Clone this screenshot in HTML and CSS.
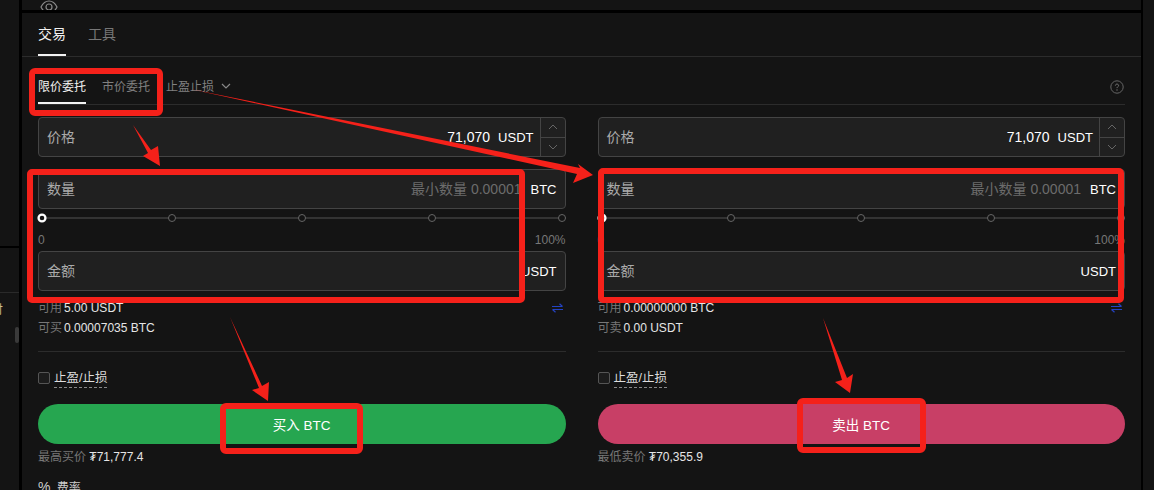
FILE: index.html
```html
<!DOCTYPE html>
<html lang="zh-CN">
<head>
    <meta charset="UTF-8">
    <meta name="viewport" content="width=device-width, initial-scale=1.0">
    <title>交易</title>
    <link rel="stylesheet" href="styles.css">
</head>
<body>
    <div class="page">
        <aside class="rail">
            <div class="rail-top"></div>
            <div class="rail-bottom">
                <span class="rail-line"></span>
                <span class="rail-glyph">付</span>
                <span class="rail-scroll"></span>
            </div>
        </aside>

        <main class="main">
            <div class="top-strip">
                <svg class="eye" width="18" height="18" viewBox="0 0 18 18" fill="none" stroke="#8a8a8a" stroke-width="1.2">
                    <path d="M1 9c2-4 5-6 8-6s6 2 8 6c-2 4-5 6-8 6s-6-2-8-6z"/>
                    <circle cx="9" cy="9" r="3"/>
                </svg>
            </div>

            <section class="panel">
                <nav class="tabs">
                    <a class="tab active">交易</a>
                    <a class="tab">工具</a>
                </nav>

                <div class="order-row">
                    <a class="order-tab active">限价委托</a>
                    <a class="order-tab">市价委托</a>
                    <a class="order-tab">止盈止损
                        <svg class="caret" width="10" height="6" viewBox="0 0 10 6" fill="none" stroke="#888" stroke-width="1.2"><path d="M1 1l4 4 4-4"/></svg>
                    </a>
                    <svg class="help" width="14" height="14" viewBox="0 0 14 14" fill="none">
                        <circle cx="7" cy="7" r="6.2" stroke="#666"/>
                        <path d="M5.4 5.6c0-.9.7-1.5 1.6-1.5s1.6.6 1.6 1.4c0 1.2-1.6 1.3-1.6 2.6" stroke="#777"/>
                        <circle cx="7" cy="10" r=".7" fill="#777"/>
                    </svg>
                </div>

                <div class="columns">
                    <div class="col">
                        <div class="field">
                            <span class="field-label">价格</span>
                            <span class="field-value">71,070</span>
                            <span class="field-unit unit-spin">USDT</span>
                            <div class="spin">
                                <span><svg width="10" height="6" viewBox="0 0 10 6" fill="none" stroke="#666"><path d="M1 5l4-4 4 4"/></svg></span>
                                <span><svg width="10" height="6" viewBox="0 0 10 6" fill="none" stroke="#666"><path d="M1 1l4 4 4-4"/></svg></span>
                            </div>
                        </div>
                        <div class="field field-gap">
                            <span class="field-label">数量</span>
                            <span class="field-hint">最小数量 0.00001</span>
                            <span class="field-unit">BTC</span>
                        </div>
                        <div class="slider">
                            <i class="dot dot-on"></i><i class="dot"></i><i class="dot"></i><i class="dot"></i><i class="dot"></i>
                        </div>
                        <div class="slider-labels"><span>0</span><span>100%</span></div>
                        <div class="field">
                            <span class="field-label">金额</span>
                            <span class="field-unit">USDT</span>
                        </div>
                        <div class="balance">
                            <div class="balance-row"><span class="muted">可用</span> <b>5.00 USDT</b>
                                <svg class="swap" width="11" height="10" viewBox="0 0 11 10" fill="none" stroke="#2443c4" stroke-width="1.2"><path d="M0 3.5h10.5M10.5 3.5L7.5 .8M11 6.5H.5M.5 6.5l3 2.7"/></svg>
                            </div>
                            <div class="balance-row"><span class="muted">可买</span> <b>0.00007035 BTC</b></div>
                        </div>
                        <div class="rule"></div>
                        <label class="check-row"><span class="box"></span><span class="check-text">止盈/止损</span></label>
                        <button class="trade-btn buy">买入 BTC</button>
                        <div class="best"><span class="muted">最高买价</span> <b>₮71,777.4</b></div>
                        <div class="fee"><span class="fee-icon">%</span> 费率</div>
                    </div>

                    <div class="col">
                        <div class="field">
                            <span class="field-label">价格</span>
                            <span class="field-value">71,070</span>
                            <span class="field-unit unit-spin">USDT</span>
                            <div class="spin">
                                <span><svg width="10" height="6" viewBox="0 0 10 6" fill="none" stroke="#666"><path d="M1 5l4-4 4 4"/></svg></span>
                                <span><svg width="10" height="6" viewBox="0 0 10 6" fill="none" stroke="#666"><path d="M1 1l4 4 4-4"/></svg></span>
                            </div>
                        </div>
                        <div class="field field-gap">
                            <span class="field-label">数量</span>
                            <span class="field-hint">最小数量 0.00001</span>
                            <span class="field-unit">BTC</span>
                        </div>
                        <div class="slider">
                            <i class="dot dot-on"></i><i class="dot"></i><i class="dot"></i><i class="dot"></i><i class="dot"></i>
                        </div>
                        <div class="slider-labels"><span>0</span><span>100%</span></div>
                        <div class="field">
                            <span class="field-label">金额</span>
                            <span class="field-unit">USDT</span>
                        </div>
                        <div class="balance">
                            <div class="balance-row"><span class="muted">可用</span> <b>0.00000000 BTC</b>
                                <svg class="swap" width="11" height="10" viewBox="0 0 11 10" fill="none" stroke="#2443c4" stroke-width="1.2"><path d="M0 3.5h10.5M10.5 3.5L7.5 .8M11 6.5H.5M.5 6.5l3 2.7"/></svg>
                            </div>
                            <div class="balance-row"><span class="muted">可卖</span> <b>0.00 USDT</b></div>
                        </div>
                        <div class="rule"></div>
                        <label class="check-row"><span class="box"></span><span class="check-text">止盈/止损</span></label>
                        <button class="trade-btn sell">卖出 BTC</button>
                        <div class="best"><span class="muted">最低卖价</span> <b>₮70,355.9</b></div>
                    </div>
                </div>
            </section>
        </main>

        <aside class="rail-right"></aside>

        <!-- red markup drawn on top of the screenshot -->
        <svg class="marks" width="1154" height="490" viewBox="0 0 1154 490">
            <g fill="none" stroke="#f5211a" stroke-width="6">
                <rect x="32" y="71" width="128" height="42" rx="3"/>
                <rect x="30" y="172" width="492" height="128" rx="2"/>
                <rect x="601" y="171" width="520" height="129" rx="2"/>
                <rect x="223" y="406" width="137" height="45" rx="3"/>
                <rect x="800" y="401" width="123" height="49" rx="3"/>
            </g>
            <g fill="#f5211a">
                <polygon points="133,125 151,150 158,146 160,166 143,156 148,153"/>
                <polygon points="190,89 580,168 578,164 593,175 573,183 577,174"/>
                <polygon points="230,317 262,386 269,382 268,401 252,390 259,388"/>
                <polygon points="823,318 847,378 853,374 850,393 835,382 842,380"/>
            </g>
        </svg>
    </div>
</body>
</html>
```

FILE: styles.css
```css
* {
    margin: 0;
    padding: 0;
    box-sizing: border-box;
}

body {
    background: #000;
    font-family: 'Liberation Sans', 'Noto Sans CJK SC', sans-serif;
    color: #eee;
    overflow: hidden;
}

.page {
    position: relative;
    display: flex;
    height: 490px;
    overflow: hidden;
    background: #000;
}

.rail {
    width: 19px;
    display: flex;
    flex-direction: column;
    gap: 2px;
}

.rail-top {
    height: 246px;
    background: #141414;
}

.rail-bottom {
    flex: 1;
    background: #141414;
    display: flex;
    flex-direction: column;
    align-items: flex-end;
    overflow: hidden;
}

.rail-line {
    width: 19px;
    height: 1px;
    margin-top: 44px;
    background: #2a2a2a;
}

.rail-glyph {
    width: 19px;
    margin-top: 7px;
    font-size: 12px;
    line-height: 20px;
    color: #c9b98a;
    text-indent: -9px;
}

.rail-scroll {
    width: 4px;
    height: 16px;
    margin-top: 7px;
    border-radius: 2px;
    background: #3a3a3a;
}

.main {
    width: 1119px;
    margin-left: 3px;
    display: flex;
    flex-direction: column;
    gap: 3px;
}

.rail-right {
    flex: 1;
    margin-left: 2px;
    background: #141414;
}

.top-strip {
    flex: none;
    height: 10px;
    background: #141414;
    padding-left: 18px;
    overflow: hidden;
}

.eye {
    display: block;
    margin-top: -2px;
}

.panel {
    flex: 1;
    min-height: 0;
    overflow: hidden;
    background: #141414;
    padding: 0 16px;
}

.tabs {
    display: flex;
    gap: 22px;
    height: 44px;
    margin: 0 -16px;
    padding: 0 16px;
    border-bottom: 1px solid #2c2c2c;
}

.tab {
    height: 43px;
    padding-top: 11px;
    font-size: 14px;
    line-height: 20px;
    color: #777;
}

.tab.active {
    color: #f2f2f2;
    border-bottom: 2px solid #f2f2f2;
}

.order-row {
    display: flex;
    gap: 16px;
    height: 48px;
    border-bottom: 1px solid #2c2c2c;
}

.order-tab {
    height: 47px;
    padding-top: 20px;
    font-size: 12px;
    line-height: 20px;
    color: #808080;
}

.order-tab.active {
    color: #f2f2f2;
    border-bottom: 2px solid #f2f2f2;
}

.caret {
    margin-left: 4px;
    vertical-align: 2px;
}

.help {
    margin-left: auto;
    margin-right: 1px;
    margin-top: 23px;
}

.columns {
    display: grid;
    grid-template-columns: 1fr 1fr;
    gap: 32px;
    margin-top: 12px;
}

.field {
    display: flex;
    align-items: center;
    height: 40px;
    padding: 0 8px;
    background: #202020;
    border: 1px solid #444;
    border-radius: 4px;
    font-size: 14px;
}

.field-gap {
    margin-top: 12px;
}

.field-label {
    color: #aaa;
    margin-right: auto;
    margin-bottom: 2px;
}

.field-value {
    color: #fff;
    margin-right: 8px;
}

.field-hint {
    color: #6c6c6c;
    margin-right: 9px;
    margin-bottom: 2px;
}

.field-unit {
    color: #fff;
    font-size: 13px;
}

.unit-spin {
    margin-right: 6px;
}

.spin {
    width: 25px;
    height: 38px;
    margin-right: -8px;
    border-left: 1px solid #444;
    display: flex;
    flex-direction: column;
}

.spin span {
    flex: 1;
    display: flex;
    align-items: center;
    justify-content: center;
}

.spin span + span {
    border-top: 1px solid #444;
}

.slider {
    display: flex;
    justify-content: space-between;
    align-items: center;
    height: 8px;
    margin-top: 5px;
    background: linear-gradient(#333, #333) center / 100% 2px no-repeat;
}

.dot {
    width: 8px;
    height: 8px;
    border: 1px solid #666;
    border-radius: 50%;
    background: #141414;
}

.dot-on {
    border: 2px solid #fff;
    transform: scale(1.15);
}

.slider-labels {
    display: flex;
    justify-content: space-between;
    margin: 8px 0 1px 0;
    font-size: 12px;
    line-height: 20px;
    color: #777;
}

.balance {
    margin-top: 7px;
    font-size: 12px;
    line-height: 20px;
}

.balance-row {
    display: flex;
    align-items: center;
    gap: 2px;
}

.balance-row b,
.best b {
    font-weight: normal;
    color: #e6e6e6;
}

.muted {
    color: #777;
}

.swap {
    margin-left: auto;
    margin-right: 3px;
}

.rule {
    height: 1px;
    margin-top: 13px;
    background: #2c2c2c;
}

.check-row {
    display: flex;
    align-items: center;
    gap: 4px;
    height: 20px;
    margin-top: 16px;
    font-size: 12.5px;
}

.box {
    width: 12px;
    height: 12px;
    border: 1px solid #555;
    border-radius: 2px;
    background: #1c1c1c;
}

.check-text {
    color: #ddd;
    line-height: 18px;
    border-bottom: 1px dashed #888;
}

.trade-btn {
    display: block;
    width: 100%;
    height: 40px;
    margin-top: 16px;
    border: none;
    border-radius: 20px;
    font-family: inherit;
    font-size: 13.5px;
    color: #fff;
}

.buy {
    background: #26a650;
}

.sell {
    background: #c83f66;
}

.best {
    margin-top: 3px;
    font-size: 12px;
    line-height: 20px;
}

.fee {
    margin-top: 10px;
    font-size: 12px;
    line-height: 20px;
    color: #ccc;
}

.fee-icon {
    font-size: 14px;
    margin-right: 3px;
}

.marks {
    position: absolute;
    left: 0;
    top: 0;
    pointer-events: none;
}
```
